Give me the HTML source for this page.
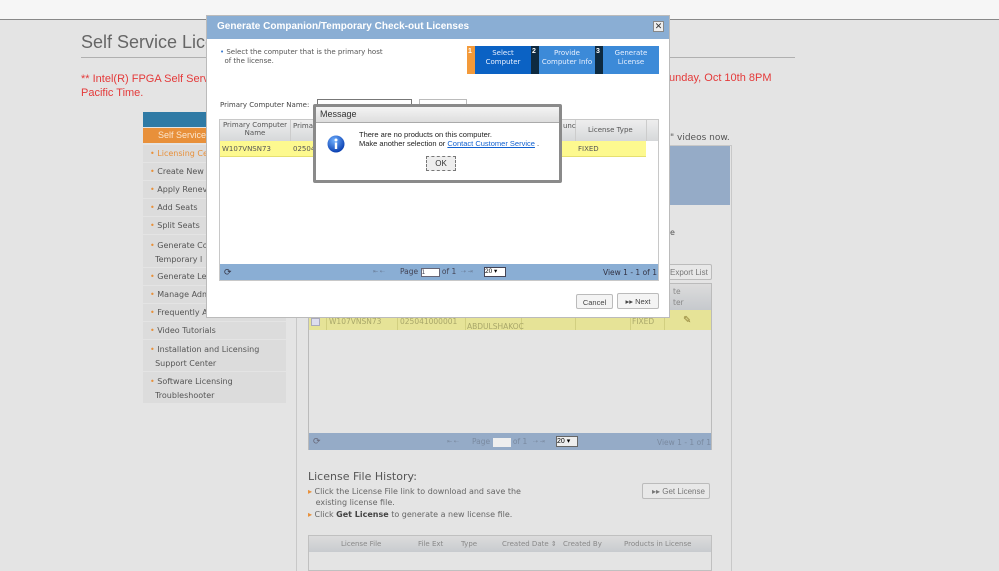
<!DOCTYPE html>
<html><head><meta charset="utf-8"><style>
*{box-sizing:border-box;margin:0;padding:0}
body{width:999px;height:571px;overflow:hidden;background:#e4e4e4;font-family:"Liberation Sans","DejaVu Sans",sans-serif;position:relative}
.a{position:absolute;white-space:nowrap}
.v{font-family:"DejaVu Sans",sans-serif}
.side{left:143px;width:143px;background:#dcdcdc;color:#555;font-size:8px;padding-left:7px}
.side b{color:#e8903a;font-weight:normal}
.bx{border:1px solid #bbb}
</style></head><body>
<div class="a" style="left:0;top:0;width:999px;height:20px;background:#f6f6f6;border-bottom:1px solid #888"></div>
<div class="a" style="left:81px;top:32px;font-size:18px;color:#666">Self Service Lice</div>
<div class="a" style="left:81px;top:57px;width:714px;height:1px;background:#b0b0b0"></div>
<div class="a" style="left:81px;top:72px;font-size:11px;color:#e43a3a;line-height:15px">** Intel(R) FPGA Self Service</div>
<div class="a" style="left:81px;top:87px;font-size:11px;color:#e43a3a">Pacific Time.</div>
<div class="a" style="left:669px;top:72px;font-size:11px;color:#e43a3a">unday, Oct 10th 8PM</div>

<div class="a" style="left:143px;top:112px;width:143px;height:15px;background:#2f7aa5"></div>
<div class="a" style="left:143px;top:128px;width:143px;height:15px;background:#e8903a;font-size:9px;padding:2px 0 0 15px;color:#fbe6cf">Self Service</div>
<div class="a side v" style="top:145px;height:17px;padding-top:4px"><b>• Licensing Ce</b></div>
<div class="a side v" style="top:163px;height:17px;padding-top:4px"><b>•</b> Create New</div>
<div class="a side v" style="top:181px;height:17px;padding-top:4px"><b>•</b> Apply Renev</div>
<div class="a side v" style="top:199px;height:17px;padding-top:4px"><b>•</b> Add Seats</div>
<div class="a side v" style="top:217px;height:17px;padding-top:4px"><b>•</b> Split Seats</div>
<div class="a side v" style="top:235px;height:32px;padding-top:4px;line-height:14px"><b>•</b> Generate Co<br>&nbsp; Temporary l</div>
<div class="a side v" style="top:268px;height:17px;padding-top:4px"><b>•</b> Generate Le</div>
<div class="a side v" style="top:286px;height:17px;padding-top:4px"><b>•</b> Manage Adm</div>
<div class="a side v" style="top:304px;height:17px;padding-top:4px"><b>•</b> Frequently A</div>
<div class="a side v" style="top:322px;height:17px;padding-top:4px"><b>•</b> Video Tutorials</div>
<div class="a side v" style="top:340px;height:31px;padding-top:3px;line-height:14px"><b>•</b> Installation and Licensing<br>&nbsp; Support Center</div>
<div class="a side v" style="top:372px;height:31px;padding-top:3px;line-height:14px"><b>•</b> Software Licensing<br>&nbsp; Troubleshooter</div>

<div class="a" style="left:296px;top:145px;width:436px;height:426px;border:1px solid #c8c8c8;border-bottom:none"></div>
<div class="a" style="left:298px;top:146px;width:432px;height:59px;background:#95abc7"></div>
<div class="a v" style="left:670px;top:133px;font-size:9px;color:#555">" videos now.</div>
<div class="a v" style="left:670px;top:228px;font-size:8px;color:#555">e</div>
<div class="a bx" style="left:660px;top:264px;width:52px;height:16px;border-radius:2px;background:#e8e8e8;font-size:8px;color:#777;padding:3px 0 0 9px">Export List</div>
<div class="a bx" style="left:308px;top:283px;width:404px;height:167px;background:#e4e4e4"></div>
<div class="a" style="left:309px;top:284px;width:402px;height:26px;background:linear-gradient(#dcdcdc,#c6c9cd)"></div>
<div class="a v" style="left:673px;top:286px;font-size:7.5px;color:#888;line-height:11px">te<br>ter</div>
<div class="a" style="left:309px;top:310px;width:402px;height:20px;background:#e6e397"></div>
<div class="a" style="left:326px;top:310px;width:1px;height:20px;background:#d2cf80"></div>
<div class="a" style="left:397px;top:310px;width:1px;height:20px;background:#d2cf80"></div>
<div class="a" style="left:465px;top:310px;width:1px;height:20px;background:#d2cf80"></div>
<div class="a" style="left:521px;top:310px;width:1px;height:20px;background:#d2cf80"></div>
<div class="a" style="left:575px;top:310px;width:1px;height:20px;background:#d2cf80"></div>
<div class="a" style="left:630px;top:310px;width:1px;height:20px;background:#d2cf80"></div>
<div class="a" style="left:664px;top:310px;width:1px;height:20px;background:#d2cf80"></div>
<div class="a v" style="left:311px;top:318px;width:9px;height:8px;border:1px solid #aab;background:#dde"></div>
<div class="a v" style="left:329px;top:317px;font-size:7.5px;color:#a9a76a">W107VNSN73</div>
<div class="a v" style="left:400px;top:317px;font-size:7.5px;color:#a9a76a">025041000001</div>
<div class="a v" style="left:467px;top:322px;font-size:7.5px;color:#a9a76a">ABDULSHAKOC</div>
<div class="a v" style="left:632px;top:317px;font-size:7.5px;color:#a9a76a">FIXED</div>
<div class="a" style="left:683px;top:315px;font-size:10px;color:#8a7a30">✎</div>
<div class="a" style="left:309px;top:433px;width:402px;height:17px;background:#95abc7"></div>
<div class="a" style="left:313px;top:436px;font-size:9px;color:#667">⟳</div>
<div class="a v" style="left:447px;top:438px;font-size:6px;color:#7a8aa0">⇤ ⇠</div>
<div class="a v" style="left:472px;top:437px;font-size:7.5px;color:#7a8aa0">Page <span style="display:inline-block;width:18px;height:9px;background:#eee;vertical-align:middle"></span> of 1</div>
<div class="a v" style="left:533px;top:438px;font-size:6px;color:#7a8aa0">⇢ ⇥</div>
<div class="a" style="left:556px;top:436px;width:22px;height:11px;background:#eee;border:1px solid #666;font-size:7px">20 ▾</div>
<div class="a v" style="left:657px;top:438px;font-size:7.5px;color:#7a8aa0">View 1 - 1 of 1</div>

<div class="a v" style="left:308px;top:470px;font-size:11px;color:#555">License File History:</div>
<div class="a v" style="left:308px;top:486px;font-size:8px;color:#666;line-height:11px"><span style="color:#e8903a">▸</span> Click the License File link to download and save the<br>&nbsp;&nbsp; existing license file.</div>
<div class="a v" style="left:308px;top:510px;font-size:8px;color:#666"><span style="color:#e8903a">▸</span> Click <b style="color:#444">Get License</b> to generate a new license file.</div>
<div class="a bx" style="left:642px;top:483px;width:68px;height:16px;background:#e8e8e8;font-size:8px;color:#777;padding:3px 0 0 9px;border-radius:2px">▸▸ Get License</div>
<div class="a" style="left:308px;top:535px;width:404px;height:36px;border:1px solid #c0c0c0;background:#e4e4e4"></div>
<div class="a v" style="left:309px;top:536px;width:402px;height:16px;background:linear-gradient(#dcdcdc,#c8cbcf);font-size:7px;color:#888;padding-top:4px">
<span style="position:absolute;left:32px">License File</span><span style="position:absolute;left:109px">File Ext</span><span style="position:absolute;left:152px">Type</span><span style="position:absolute;left:193px">Created Date ⇕</span><span style="position:absolute;left:254px">Created By</span><span style="position:absolute;left:315px">Products in License</span></div>

<!-- dialog -->
<div class="a" style="left:206px;top:15px;width:464px;height:303px;background:#fff;border:1px solid #bbb"></div>
<div class="a" style="left:207px;top:16px;width:462px;height:23px;background:#8aaed4;color:#fff;font-weight:bold;font-size:10px;padding:5px 0 0 10px">Generate Companion/Temporary Check-out Licenses</div>
<div class="a" style="left:653px;top:21px;width:11px;height:11px;background:#eee;border:1px solid #888;font-size:9px;line-height:9px;text-align:center;color:#333">✕</div>
<div class="a v" style="left:220px;top:48px;font-size:7px;color:#555;line-height:9px"><span style="color:#3a7ad0">•</span> Select the computer that is the primary host<br>&nbsp;&nbsp;of the license.</div>
<div class="a" style="left:467px;top:46px;width:8px;height:28px;background:#f39a3a;color:#fff;font-size:7px;font-weight:bold;padding:2px 0 0 1px">1</div>
<div class="a v" style="left:475px;top:46px;width:56px;height:28px;background:#0b62c4;color:#e8f0ff;font-size:7px;text-align:center;line-height:9px;padding-top:3px">Select<br>Computer</div>
<div class="a" style="left:531px;top:46px;width:8px;height:28px;background:#0e2a40;color:#fff;font-size:7px;font-weight:bold;padding:2px 0 0 1px">2</div>
<div class="a v" style="left:539px;top:46px;width:56px;height:28px;background:#3c8ad8;color:#e8f0ff;font-size:7px;text-align:center;line-height:9px;padding-top:3px">Provide<br>Computer Info</div>
<div class="a" style="left:595px;top:46px;width:8px;height:28px;background:#0e2a40;color:#fff;font-size:7px;font-weight:bold;padding:2px 0 0 1px">3</div>
<div class="a v" style="left:603px;top:46px;width:56px;height:28px;background:#3c8ad8;color:#e8f0ff;font-size:7px;text-align:center;line-height:9px;padding-top:3px">Generate<br>License</div>
<div class="a v" style="left:220px;top:101px;font-size:7px;color:#444">Primary Computer Name:</div>
<div class="a" style="left:317px;top:99px;width:95px;height:8px;border:1px solid #777;border-bottom:none"></div>
<div class="a" style="left:419px;top:99px;width:48px;height:8px;border:1px solid #bbb;border-bottom:none"></div>
<div class="a" style="left:219px;top:119px;width:440px;height:162px;border:1px solid #c8c8c8"></div>
<div class="a v" style="left:220px;top:120px;width:438px;height:21px;background:linear-gradient(#eee,#d6d8da);font-size:7px;color:#555"></div>
<div class="a v" style="left:220px;top:121px;width:70px;font-size:7px;color:#555;text-align:center;line-height:8px">Primary Computer<br>Name</div>
<div class="a" style="left:290px;top:120px;width:1px;height:37px;background:#ccc"></div>
<div class="a v" style="left:293px;top:122px;font-size:7px;color:#555">Prima</div>
<div class="a" style="left:575px;top:120px;width:1px;height:37px;background:#ccc"></div>
<div class="a" style="left:646px;top:120px;width:1px;height:21px;background:#ccc"></div>
<div class="a v" style="left:563px;top:122px;font-size:7px;color:#555">unc</div>
<div class="a v" style="left:588px;top:126px;font-size:7px;color:#555">License Type</div>
<div class="a" style="left:220px;top:141px;width:426px;height:16px;background:#fdf98f;border-bottom:1px solid #e6e070"></div>
<div class="a v" style="left:222px;top:145px;font-size:7px;color:#555">W107VNSN73</div>
<div class="a v" style="left:293px;top:145px;font-size:7px;color:#555">02504</div>
<div class="a v" style="left:578px;top:145px;font-size:7px;color:#555">FIXED</div>
<div class="a" style="left:220px;top:264px;width:438px;height:16px;background:#8aaed4"></div>
<div class="a" style="left:224px;top:267px;font-size:9px;color:#334">⟳</div>
<div class="a v" style="left:373px;top:268px;font-size:6px;color:#6b7e99">⇤ ⇠</div>
<div class="a v" style="left:400px;top:267px;font-size:7.5px;color:#445">Page <span style="display:inline-block;width:19px;height:9px;background:#fff;border:1px solid #667;vertical-align:middle;font-size:6px">1</span> of 1</div>
<div class="a v" style="left:461px;top:268px;font-size:6px;color:#6b7e99">⇢ ⇥</div>
<div class="a" style="left:484px;top:267px;width:22px;height:10px;background:#fff;border:1px solid #445;font-size:6.5px;line-height:8px">20 ▾</div>
<div class="a v" style="left:603px;top:268px;font-size:7.5px;color:#334">View 1 - 1 of 1</div>
<div class="a bx" style="left:576px;top:294px;width:37px;height:15px;background:#f4f4f4;font-size:7.5px;color:#444;text-align:center;padding-top:3px;border-radius:2px">Cancel</div>
<div class="a bx" style="left:617px;top:293px;width:42px;height:16px;background:#f4f4f4;font-size:7.5px;color:#444;text-align:center;padding-top:3px;border-radius:2px">▸▸ Next</div>

<!-- message -->
<div class="a" style="left:313px;top:104px;width:249px;height:79px;background:#fff;border:3px solid #8a8a8a;border-radius:2px"></div>
<div class="a" style="left:316px;top:107px;width:243px;height:16px;background:linear-gradient(#f4f4f4,#dedede);border-bottom:1px solid #aaa;font-size:9px;color:#333;padding:2px 0 0 4px">Message</div>
<svg class="a" style="left:327px;top:135px" width="18" height="18" viewBox="0 0 18 18"><defs><radialGradient id="g" cx="40%" cy="30%" r="70%"><stop offset="0" stop-color="#6fb0ff"/><stop offset="1" stop-color="#0a3fb0"/></radialGradient></defs><circle cx="9" cy="9" r="8.5" fill="url(#g)"/><circle cx="9" cy="5" r="1.5" fill="#fff"/><rect x="7.8" y="7.5" width="2.4" height="6.5" fill="#fff"/></svg>
<div class="a" style="left:359px;top:130px;font-size:7.5px;color:#222;line-height:9px">There are no products on this computer.<br>Make another selection or <span style="color:#1060d0;text-decoration:underline">Contact Customer Service</span> .</div>
<div class="a" style="left:426px;top:156px;width:30px;height:15px;border:1px dashed #777;background:#eee;font-size:8px;text-align:center;padding-top:2px;color:#333">OK</div>
</body></html>
